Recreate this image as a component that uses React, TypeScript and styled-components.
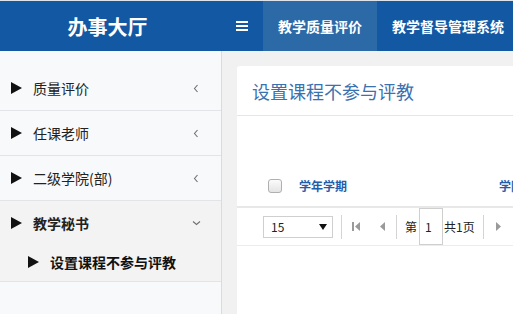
import React from "react";
import styled, { createGlobalStyle } from "styled-components";

const Global = createGlobalStyle`
  html, body { margin: 0; padding: 0; }
  body {
    font-family: "Noto Sans CJK SC", "Noto Sans", sans-serif;
    background: #f1f1f1;
    width: 513px;
    height: 314px;
    overflow: hidden;
  }
`;

const Page = styled.div`
  width: 513px;
  height: 314px;
  display: flex;
  flex-direction: column;
  border-top: 1px solid #dde3ea;
  box-sizing: border-box;
  overflow: hidden;
`;

const Header = styled.header`
  height: 50px;
  flex: none;
  background: #1358a3;
  display: flex;
  align-items: stretch;
  color: #fff;
`;

const Brand = styled.div`
  width: 221px;
  flex: none;
  display: flex;
  align-items: center;
  justify-content: center;
  font-size: 20px;
  font-weight: 700;
  padding-right: 6px;
  box-sizing: border-box;
`;

const Burger = styled.div`
  width: 42px;
  flex: none;
  display: flex;
  align-items: center;
  justify-content: center;
  padding-right: 1px;
  box-sizing: border-box;
`;

const NavItem = styled.div<{ $active?: boolean }>`
  display: flex;
  align-items: center;
  padding: 0 15px;
  font-size: 14px;
  font-weight: 700;
  white-space: nowrap;
  background: ${(p) => (p.$active ? "#2c69a7" : "transparent")};
`;

const Body = styled.div`
  flex: 1;
  display: flex;
  min-height: 0;
`;

const Sidebar = styled.aside`
  width: 221px;
  flex: none;
  background: #f8f9fb;
  border-right: 1px solid #d8dbe0;
  padding-top: 15px;
`;

const MenuItem = styled.div<{ $open?: boolean }>`
  height: 44px;
  display: flex;
  align-items: center;
  padding: 0 20px 0 11px;
  border-bottom: 1px solid #e2e4e8;
  font-size: 14px;
  color: #222;
  font-weight: ${(p) => (p.$open ? 700 : 400)};
  background: ${(p) => (p.$open ? "#f3f3f3" : "transparent")};
`;

const Group = styled.div`
  background: #f3f3f3;
  border-bottom: 1px solid #e2e4e8;
`;

const GroupHead = styled(MenuItem)`
  border-bottom: none;
`;

const SubItem = styled.div`
  height: 36px;
  display: flex;
  align-items: center;
  padding: 0 0 2px 28px;
  box-sizing: border-box;
  font-size: 14px;
  font-weight: 700;
  color: #111;
`;

const Tri = styled.span`
  width: 0;
  height: 0;
  border-top: 6px solid transparent;
  border-bottom: 6px solid transparent;
  border-left: 11px solid #111;
  margin-right: 11px;
  flex: none;
`;

const Label = styled.span`
  flex: 1;
`;

const Chev = styled.span`
  width: 10px;
  display: flex;
  justify-content: center;
  color: #666;
`;

const Main = styled.main`
  flex: 1;
  padding: 15px 0 0 15px;
  min-width: 0;
`;

const Card = styled.div`
  background: #fff;
  height: 100%;
  border-radius: 3px 0 0 0;
`;

const CardTitle = styled.div`
  height: 49px;
  display: flex;
  align-items: center;
  padding: 0 15px;
  font-size: 18px;
  color: #3a72b0;
  border-bottom: 1px solid #e6e6e6;
  white-space: nowrap;
`;

const TableHead = styled.div`
  margin-top: 49px;
  height: 41px;
  display: flex;
  align-items: center;
  border-bottom: 2px solid #e8e8e8;
  font-size: 12px;
  font-weight: 700;
  color: #1f5ea8;
  white-space: nowrap;
`;

const CheckCell = styled.div`
  width: 62px;
  flex: none;
  display: flex;
  padding-left: 31px;
  box-sizing: border-box;
`;

const CheckBox = styled.span`
  width: 14px;
  height: 14px;
  border: 1px solid #b0b0b0;
  border-radius: 3px;
  background: linear-gradient(#fbfbfb, #e4e4e4);
  box-sizing: border-box;
`;

const HeadCell = styled.div<{ $w: number }>`
  width: ${(p) => p.$w}px;
  flex: none;
  overflow: hidden;
`;

const Pager = styled.div`
  height: 37px;
  display: flex;
  align-items: center;
  border-bottom: 1px solid #ececec;
  padding-left: 26px;
  font-size: 12px;
  color: #222;
  white-space: nowrap;
`;

const Select = styled.div`
  width: 70px;
  height: 22px;
  border: 1px solid #cfcfcf;
  box-sizing: border-box;
  display: flex;
  align-items: center;
  justify-content: space-between;
  padding: 0 5px 0 7px;
  font-size: 12px;
`;

const Sep = styled.span<{ $ml: number }>`
  width: 1px;
  height: 24px;
  background: #d4d4d4;
  margin-left: ${(p) => p.$ml}px;
  flex: none;
`;

const PgIcon = styled.span<{ $ml: number }>`
  display: flex;
  margin-left: ${(p) => p.$ml}px;
`;

const PageInput = styled.span`
  width: 24px;
  height: 37px;
  border: 1px solid #cfcfcf;
  box-sizing: border-box;
  display: flex;
  align-items: center;
  padding-left: 5px;
  margin: 0 1px 0 2px;
`;

const Txt = styled.span<{ $ml?: number }>`
  margin-left: ${(p) => p.$ml ?? 0}px;
`;

const ChevLeft = () => (
  <svg width="6" height="9" viewBox="0 0 6 9">
    <path d="M4.5 1 L1.5 4.5 L4.5 8" fill="none" stroke="#6f6f6f" strokeWidth="1.1" />
  </svg>
);
const ChevDown = () => (
  <svg width="9" height="6" viewBox="0 0 9 6">
    <path d="M1 1.5 L4.5 4.5 L8 1.5" fill="none" stroke="#6f6f6f" strokeWidth="1.1" />
  </svg>
);

const Icon = {
  first: (
    <svg width="9" height="11" viewBox="0 0 9 11">
      <rect x="0" y="1" width="2" height="9" fill="#9a9a9a" />
      <path d="M8 1 L3 5.5 L8 10 Z" fill="#9a9a9a" />
    </svg>
  ),
  prev: (
    <svg width="6" height="11" viewBox="0 0 6 11">
      <path d="M6 1 L1 5.5 L6 10 Z" fill="#9a9a9a" />
    </svg>
  ),
  next: (
    <svg width="6" height="11" viewBox="0 0 6 11">
      <path d="M0 1 L5 5.5 L0 10 Z" fill="#9a9a9a" />
    </svg>
  ),
};

export default function App() {
  return (
    <>
      <Global />
      <Page>
        <Header>
          <Brand>办事大厅</Brand>
          <Burger>
            <svg width="12" height="10" viewBox="0 0 12 10">
              <rect x="0" y="0" width="12" height="2" fill="#fff" />
              <rect x="0" y="4" width="12" height="2" fill="#fff" />
              <rect x="0" y="8" width="12" height="2" fill="#fff" />
            </svg>
          </Burger>
          <NavItem $active>教学质量评价</NavItem>
          <NavItem>教学督导管理系统</NavItem>
        </Header>
        <Body>
          <Sidebar>
            <MenuItem>
              <Tri />
              <Label>质量评价</Label>
              <Chev><ChevLeft /></Chev>
            </MenuItem>
            <MenuItem>
              <Tri />
              <Label>任课老师</Label>
              <Chev><ChevLeft /></Chev>
            </MenuItem>
            <MenuItem>
              <Tri />
              <Label>二级学院(部)</Label>
              <Chev><ChevLeft /></Chev>
            </MenuItem>
            <Group>
              <GroupHead $open>
                <Tri />
                <Label>教学秘书</Label>
                <Chev><ChevDown /></Chev>
              </GroupHead>
              <SubItem>
                <Tri />
                设置课程不参与评教
              </SubItem>
            </Group>
          </Sidebar>
          <Main>
            <Card>
              <CardTitle>设置课程不参与评教</CardTitle>
              <TableHead>
                <CheckCell><CheckBox /></CheckCell>
                <HeadCell $w={200}>学年学期</HeadCell>
                <HeadCell $w={40}>学院</HeadCell>
              </TableHead>
              <Pager>
                <Select>
                  <Txt>15</Txt>
                  <svg width="8" height="6" viewBox="0 0 8 6">
                    <path d="M0 0 L8 0 L4 6 Z" fill="#111" />
                  </svg>
                </Select>
                <Sep $ml={8} />
                <PgIcon $ml={10}>{Icon.first}</PgIcon>
                <PgIcon $ml={18}>{Icon.prev}</PgIcon>
                <Sep $ml={11} />
                <Txt $ml={8}>第</Txt>
                <PageInput>1</PageInput>
                <Txt>共1页</Txt>
                <Sep $ml={8} />
                <PgIcon $ml={12}>{Icon.next}</PgIcon>
              </Pager>
            </Card>
          </Main>
        </Body>
      </Page>
    </>
  );
}
